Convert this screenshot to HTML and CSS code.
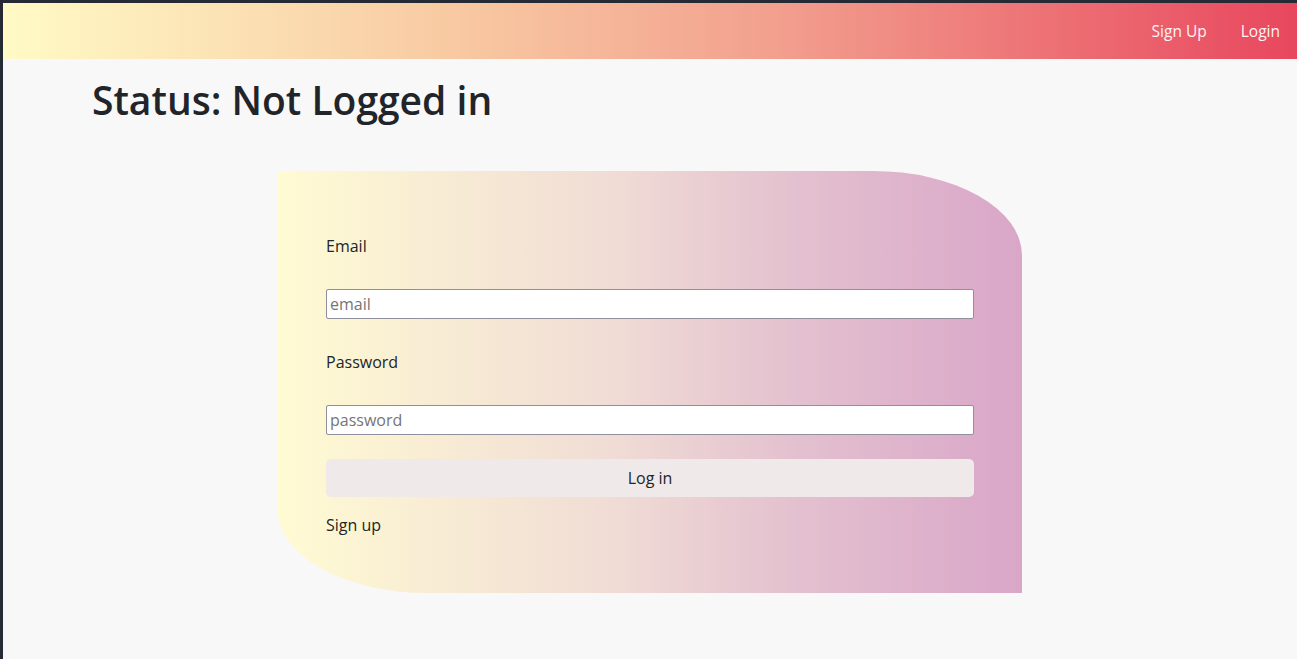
FILE: index.html
```html
<!DOCTYPE html>
<html lang="en">
<head>
<meta charset="utf-8">
<title>Status</title>
<link rel="stylesheet" href="styles.css">
</head>
<body>
<div class="window">
  <header class="navbar">
    <nav class="nav-links">
      <a href="#" class="nav-link">Sign Up</a>
      <a href="#" class="nav-link">Login</a>
    </nav>
  </header>
  <main class="content">
    <h1 class="status">Status: Not Logged in</h1>
    <div class="card-wrap">
      <form class="card">
        <label class="field-label" for="email">Email</label>
        <input class="field-input" id="email" type="text" placeholder="email">
        <label class="field-label" for="password">Password</label>
        <input class="field-input" id="password" type="password" placeholder="password">
        <button type="button" class="btn-login">Log in</button>
        <a href="#" class="signup-link">Sign up</a>
      </form>
    </div>
  </main>
</div>
</body>
</html>
```
FILE: styles.css
```css
* { box-sizing: border-box; }
html, body { margin: 0; padding: 0; }
body {
  background: #262a35;
  font-family: "Open Sans", "Noto Sans", sans-serif;
  color: #212529;
  overflow: hidden;
}
.window {
  margin: 3px 0 0 3px;
  background: #f8f8f8;
  height: 656px;
}
.navbar {
  height: 56px;
  background: linear-gradient(to right, #fffac6, #f8c9a2 35%, #f29f8e 60%, #e8475e);
  display: flex;
  justify-content: flex-end;
  align-items: center;
  padding-right: 17px;
}
.nav-links { display: flex; gap: 34px; }
.nav-link {
  color: #fff3f4;
  text-decoration: none;
  font-size: 15.5px;
}
.content { padding: 0 0 0 89px; }
.status {
  margin: 0;
  padding-top: 17px;
  font-size: 39px;
  line-height: 48px;
  font-weight: 600;
  letter-spacing: 0;
}
.card-wrap {
  padding: 47px 0 0 185px;
}
.card {
  width: 745px;
  height: 422px;
  border-radius: 0 20% 0 20%;
  background: linear-gradient(to right, #fffbd3, #f0dcd5 45%, #e3c0cf 70%, #d9a6c8);
  padding: 63px 48px 0 49px;
  display: flex;
  flex-direction: column;
}
.field-label {
  font-size: 16px;
  line-height: 24px;
  margin-bottom: 31px;
}
.field-input {
  height: 30px;
  border: 1px solid #8f8f9d;
  border-radius: 2px;
  background: #fff;
  padding: 0 3px;
  font-family: inherit;
  font-size: 16px;
  color: #212529;
  margin-bottom: 31px;
}
.field-input::placeholder { color: #757575; }
#password { margin-bottom: 24px; }
.btn-login {
  height: 38px;
  border: none;
  border-radius: 5px;
  background: #efe9e9;
  font-family: inherit;
  font-size: 16px;
  color: #212529;
  margin-bottom: 16px;
}
.signup-link {
  font-size: 16px;
  line-height: 24px;
  color: #212529;
  text-decoration: none;
}
```
